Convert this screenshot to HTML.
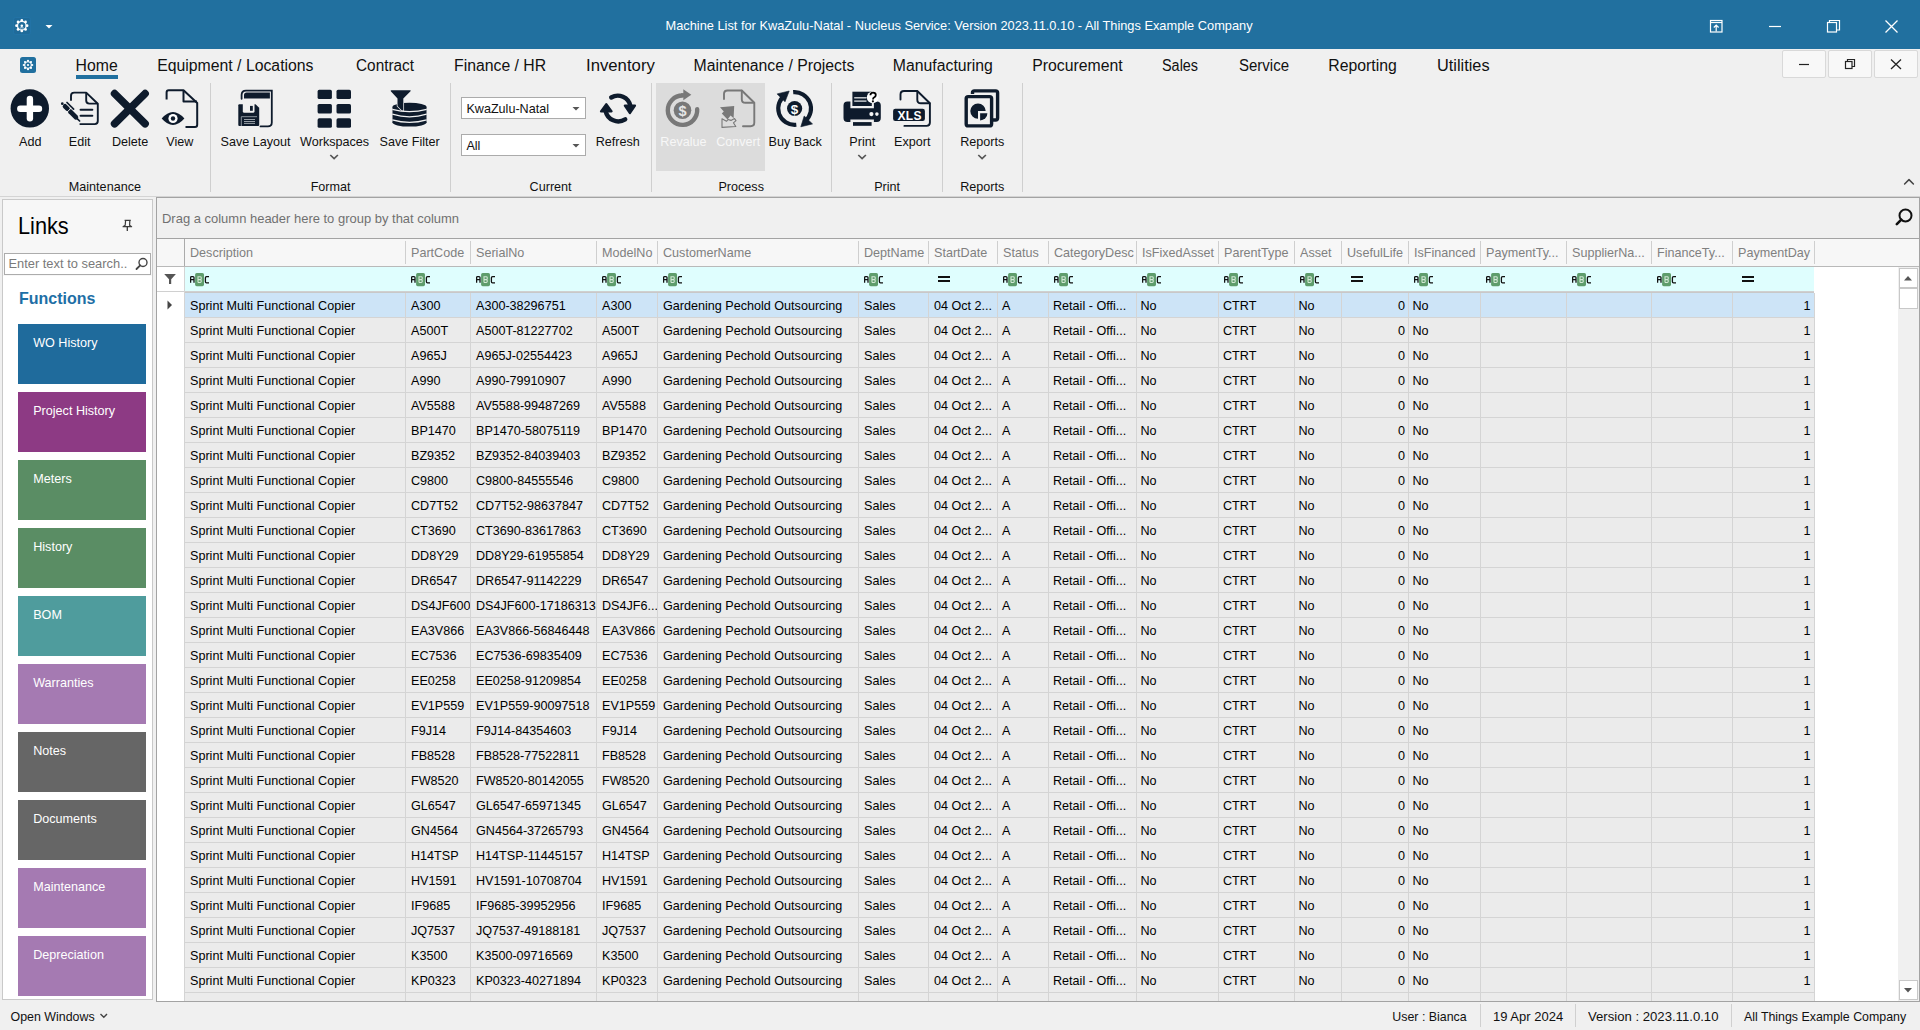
<!DOCTYPE html><html><head><meta charset="utf-8"><style>
*{margin:0;padding:0}
html,body{width:1920px;height:1030px;overflow:hidden}
body{position:relative;background:#F0F0F0;font-family:"Liberation Sans", sans-serif}
.t{position:absolute;white-space:nowrap;line-height:1}
.c{text-align:center}
.r{position:absolute}
.row{position:absolute;left:185px;width:1629px;height:24px}
.row span{position:absolute;top:7.2px;font-size:12.6px;line-height:1;white-space:nowrap;color:#000}
.row span.rr{left:auto}
</style></head><body><div class="r" style="left:0px;top:0px;width:1920px;height:49px;background:#21709F;"></div>
<svg class="r" style="left:0;top:0" width="1920" height="196" viewBox="0 0 1920 196">
<rect x="13.5" y="17.5" width="17" height="17" rx="2" fill="#1F6B9A" stroke="#2375A8" stroke-width="0.8"/>
<g transform="translate(21.8,25.7)" fill="#fff">
 <circle r="4.3" fill="none" stroke="#F2F5F8" stroke-width="1.3"/>
 <circle cx="0" cy="-5.3" r="1.35"/><circle cx="0" cy="5.3" r="1.35"/><circle cx="-5.3" cy="0" r="1.35"/><circle cx="5.3" cy="0" r="1.35"/>
 <circle cx="-3.75" cy="-3.75" r="1.35"/><circle cx="3.75" cy="3.75" r="1.35"/><circle cx="-3.75" cy="3.75" r="1.35"/><circle cx="3.75" cy="-3.75" r="1.35"/>
 <circle r="1.3"/>
 <path d="M-2 2.6 Q0 1.2 2 2.6" stroke="#9DBDD3" stroke-width="1.2" fill="none"/>
</g>
<path d="M45.5 25 L52.5 25 L49 28.5 Z" fill="#fff"/>
<!-- right window controls -->
<g stroke="#fff" stroke-width="1.2" fill="none">
 <rect x="1710.5" y="20.5" width="11.5" height="11.5"/>
 <line x1="1711" y1="22.5" x2="1722" y2="22.5"/>
 <path d="M1716.2 31.5 V25.5 M1713.8 27.5 L1716.2 25 L1718.6 27.5"/>
 <line x1="1769" y1="26.5" x2="1781" y2="26.5"/>
 <rect x="1827.5" y="22.5" width="9" height="9.5"/>
 <path d="M1829.5 22.5 V20.5 H1839.5 V30 H1837"/>
 <path d="M1885.5 20.5 L1897.5 32.5 M1897.5 20.5 L1885.5 32.5" stroke-width="1.3"/>
</g>
<!-- menu gear -->
<rect x="20" y="57" width="16" height="16" rx="2.5" fill="#21709F"/>
<g transform="translate(28,65)" fill="#fff">
 <circle r="3.3" fill="none" stroke="#fff" stroke-width="1.1"/>
 <circle cx="0" cy="-4.2" r="1.1"/><circle cx="0" cy="4.2" r="1.1"/><circle cx="-4.2" cy="0" r="1.1"/><circle cx="4.2" cy="0" r="1.1"/>
 <circle cx="-2.97" cy="-2.97" r="1.1"/><circle cx="2.97" cy="2.97" r="1.1"/><circle cx="-2.97" cy="2.97" r="1.1"/><circle cx="2.97" cy="-2.97" r="1.1"/>
 <circle r="1.1"/>
</g>
<rect x="76" y="75" width="42" height="4" fill="#21709F"/>
<path d="M1904.6 184 L1909 179.6 L1913.4 184" fill="none" stroke="#444" stroke-width="1.5" stroke-linecap="round" stroke-linejoin="round"/>
<!-- MDI buttons -->
<g fill="#F8F8F8" stroke="#D9D9D9">
 <rect x="1782.5" y="50.5" width="43" height="27" rx="1.5"/>
 <rect x="1828.5" y="50.5" width="43" height="27" rx="1.5"/>
 <rect x="1874.5" y="50.5" width="43" height="27" rx="1.5"/>
</g>
<g stroke="#222" stroke-width="1.2" fill="none">
 <line x1="1799" y1="64.5" x2="1809" y2="64.5"/>
 <rect x="1845.5" y="61.5" width="6.5" height="7"/>
 <path d="M1847.5 61.5 V59.5 H1854.5 V66.5 H1852"/>
 <path d="M1891 59.5 L1901 69 M1901 59.5 L1891 69" stroke-width="1.3"/>
</g>
</svg>
<div class="t" style="left:665.5px;top:20.0px;font-size:12.8px;color:#fff;">Machine List for KwaZulu-Natal - Nucleus Service: Version 2023.11.0.10 - All Things Example Company</div>
<div class="t" style="left:75.6px;top:58.0px;font-size:15.8px;color:#111;">Home</div>
<div class="t" style="left:157.2px;top:58.0px;font-size:15.8px;color:#111;">Equipment / Locations</div>
<div class="t" style="left:355.9px;top:58.0px;font-size:15.8px;color:#111;transform:scaleX(0.972);transform-origin:0 0">Contract</div>
<div class="t" style="left:454.0px;top:58.0px;font-size:15.8px;color:#111;">Finance / HR</div>
<div class="t" style="left:585.5px;top:58.0px;font-size:15.8px;color:#111;transform:scaleX(1.059);transform-origin:0 0">Inventory</div>
<div class="t" style="left:693.6px;top:58.0px;font-size:15.8px;color:#111;">Maintenance / Projects</div>
<div class="t" style="left:892.8px;top:58.0px;font-size:15.8px;color:#111;">Manufacturing</div>
<div class="t" style="left:1032.2px;top:58.0px;font-size:15.8px;color:#111;">Procurement</div>
<div class="t" style="left:1162.4px;top:58.0px;font-size:15.8px;color:#111;transform:scaleX(0.913);transform-origin:0 0">Sales</div>
<div class="t" style="left:1238.7px;top:58.0px;font-size:15.8px;color:#111;transform:scaleX(0.95);transform-origin:0 0">Service</div>
<div class="t" style="left:1328.25px;top:58.0px;font-size:15.8px;color:#111;">Reporting</div>
<div class="t" style="left:1437.1px;top:58.0px;font-size:15.8px;color:#111;transform:scaleX(1.032);transform-origin:0 0">Utilities</div>
<div class="r" style="left:210px;top:83px;width:1px;height:109px;background:#CFCFCF;"></div>
<div class="r" style="left:450px;top:83px;width:1px;height:109px;background:#CFCFCF;"></div>
<div class="r" style="left:651px;top:83px;width:1px;height:109px;background:#CFCFCF;"></div>
<div class="r" style="left:831px;top:83px;width:1px;height:109px;background:#CFCFCF;"></div>
<div class="r" style="left:942px;top:83px;width:1px;height:109px;background:#CFCFCF;"></div>
<div class="r" style="left:1022px;top:83px;width:1px;height:109px;background:#CFCFCF;"></div>
<div class="r" style="left:656px;top:83px;width:109px;height:88px;background:#DCDCDC;"></div>
<div class="r" style="left:0px;top:196px;width:1920px;height:1px;background:#D4D4D4;"></div>
<div class="t c" style="left:-69.7px;width:200px;top:136.3px;font-size:12.6px;color:#111">Add</div>
<div class="t c" style="left:-20.299999999999997px;width:200px;top:136.3px;font-size:12.6px;color:#111">Edit</div>
<div class="t c" style="left:30.099999999999994px;width:200px;top:136.3px;font-size:12.6px;color:#111">Delete</div>
<div class="t c" style="left:79.9px;width:200px;top:136.3px;font-size:12.6px;color:#111">View</div>
<div class="t c" style="left:155.6px;width:200px;top:136.3px;font-size:12.6px;color:#111">Save Layout</div>
<div class="t c" style="left:234.60000000000002px;width:200px;top:136.3px;font-size:12.6px;color:#111">Workspaces</div>
<div class="t c" style="left:309.7px;width:200px;top:136.3px;font-size:12.6px;color:#111">Save Filter</div>
<div class="t c" style="left:517.7px;width:200px;top:136.3px;font-size:12.6px;color:#111">Refresh</div>
<div class="t c" style="left:695.2px;width:200px;top:136.3px;font-size:12.6px;color:#111">Buy Back</div>
<div class="t c" style="left:762.3px;width:200px;top:136.3px;font-size:12.6px;color:#111">Print</div>
<div class="t c" style="left:812.3px;width:200px;top:136.3px;font-size:12.6px;color:#111">Export</div>
<div class="t c" style="left:882.3px;width:200px;top:136.3px;font-size:12.6px;color:#111">Reports</div>
<div class="t c" style="left:583.4px;width:200px;top:136.3px;font-size:12.6px;color:#F7F7F7">Revalue</div>
<div class="t c" style="left:638.2px;width:200px;top:136.3px;font-size:12.6px;color:#F7F7F7">Convert</div>
<div class="t c" style="left:4.900000000000006px;width:200px;top:181.3px;font-size:12.6px;color:#111">Maintenance</div>
<div class="t c" style="left:230.60000000000002px;width:200px;top:181.3px;font-size:12.6px;color:#111">Format</div>
<div class="t c" style="left:450.6px;width:200px;top:181.3px;font-size:12.6px;color:#111">Current</div>
<div class="t c" style="left:641.2px;width:200px;top:181.3px;font-size:12.6px;color:#111">Process</div>
<div class="t c" style="left:787.1px;width:200px;top:181.3px;font-size:12.6px;color:#111">Print</div>
<div class="t c" style="left:882.3px;width:200px;top:181.3px;font-size:12.6px;color:#111">Reports</div>
<div class="r" style="left:461px;top:97px;width:123px;height:20px;background:#fff;border:1px solid #ABABAB"></div>
<div class="t" style="left:466.4px;top:102.7px;font-size:12.6px;color:#111;">KwaZulu-Natal</div>
<div class="r" style="left:461px;top:134px;width:123px;height:20px;background:#fff;border:1px solid #ABABAB"></div>
<div class="t" style="left:466.4px;top:139.7px;font-size:12.6px;color:#111;">All</div>
<svg class="r" style="left:0;top:0" width="1040" height="200" viewBox="0 0 1040 200">
<g fill="#555"><path d="M572.5 107 H579.5 L576 110.5 Z"/><path d="M572.5 144 H579.5 L576 147.5 Z"/></g>
<g fill="none" stroke="#555" stroke-width="1.3">
 <path d="M330.3 155 L334.1 158.6 L337.9 155" stroke-width="1.7"/>
 <path d="M858.3 155 L862.1 158.6 L865.9 155" stroke-width="1.7"/>
 <path d="M978.3 155 L982.1 158.6 L985.9 155" stroke-width="1.7"/>
</g>
<!-- Add -->
<circle cx="29.8" cy="108.4" r="19.2" fill="#0E1B2C"/>
<g stroke="#fff" stroke-width="6.4" stroke-linecap="round"><line x1="20.3" y1="108.8" x2="39" y2="108.8"/><line x1="29.9" y1="99" x2="29.9" y2="118.2"/></g>
<!-- Edit -->
<g fill="none" stroke="#0E1B2C" stroke-width="1.9" stroke-linejoin="round" stroke-linecap="round">
 <path d="M71 100 V95.8 Q71 92.6 74.2 92.6 H86.2 L97.8 103.7 V121 Q97.8 124.1 94.7 124.1 H80.3"/>
 <path d="M86.2 92.9 V100.5 Q86.2 103.6 89.3 103.6 H97"/>
 <path d="M80.6 109.7 H92.3 M80.6 115.8 H92.3" stroke-width="2.1"/>
</g>
<g stroke="#0E1B2C" stroke-linecap="round">
 <circle cx="62.3" cy="103.7" r="1.35" fill="#0E1B2C" stroke="none"/>
 <line x1="65" y1="106.3" x2="67.6" y2="108.9" stroke-width="4.6"/>
 <line x1="70.3" y1="111.6" x2="75.8" y2="117.1" stroke-width="4.8"/>
 <line x1="77.2" y1="118.6" x2="79.6" y2="121" stroke-width="1.7"/>
 <line x1="67" y1="102.5" x2="73.6" y2="109.1" stroke-width="1.7"/>
 <line x1="66.9" y1="112.3" x2="71.3" y2="107.9" stroke="#F0F0F0" stroke-width="1" stroke-linecap="butt"/>
</g>
<!-- Delete -->
<g stroke="#0E1B2C" stroke-width="7.6" stroke-linecap="round"><line x1="114.6" y1="93.6" x2="145.1" y2="123.8"/><line x1="145.1" y1="93.6" x2="114.6" y2="123.8"/></g>
<!-- View -->
<g fill="none" stroke="#0E1B2C" stroke-width="2" stroke-linejoin="round">
 <path d="M166.6 99.5 V92.5 Q166.6 90.3 168.8 90.3 H183.5 L197.2 103 V124.8 Q197.2 127 195 127 H185.5"/>
 <path d="M183.5 90.5 V101.5 H197"/>
</g>
<path d="M161.7 118.5 Q172.9 105.5 184.4 118.5 Q172.9 131.5 161.7 118.5 Z" fill="#0E1B2C"/>
<circle cx="173" cy="118.5" r="4.6" fill="#fff"/><circle cx="173" cy="118.5" r="2.2" fill="#0E1B2C"/>
<!-- Save Layout -->
<path d="M241.6 98.8 V95 Q241.6 90.6 246 90.6 H271.8 V122.5 Q271.8 126.4 267.9 126.4 H260.5" fill="none" stroke="#0E1B2C" stroke-width="1.8" stroke-linecap="round"/>
<path d="M244 98.4 V94.9 Q244 92.4 246.5 92.4 H269.9 V98.4 Z" fill="#0E1B2C"/>
<path d="M239.3 104.2 H255.5 L259.2 107.8 V125 Q259.2 126 258.2 126 H239.3 Q238.3 126 238.3 125 V105.2 Q238.3 104.2 239.3 104.2 Z" fill="#0E1B2C"/>
<path d="M242.8 104 V111.2 Q242.8 112.7 244.3 112.7 H253 Q254.5 112.7 254.5 111.2 V104 Z" fill="#F0F0F0"/>
<rect x="250" y="105.9" width="2.8" height="4.9" fill="#0E1B2C"/>
<g stroke="#8A939C" stroke-width="1"><path d="M241.3 126 V116.7 H257" fill="none"/></g>
<g stroke="#A8AFB6" stroke-width="0.9"><line x1="244" y1="119.5" x2="255" y2="119.5"/><line x1="244" y1="121.5" x2="255" y2="121.5"/><line x1="244" y1="123.4" x2="255" y2="123.4"/></g>
<!-- Workspaces -->
<g fill="#0E1B2C">
 <rect x="317.6" y="89.8" width="14.3" height="9.2" rx="1.6"/><rect x="336.5" y="89.8" width="14.5" height="9.2" rx="1.6"/>
 <rect x="317.6" y="104" width="14.3" height="9.5" rx="1.6"/><rect x="336.5" y="104" width="14.5" height="9.5" rx="1.6"/>
 <rect x="317.6" y="118.3" width="14.3" height="9.5" rx="1.6"/><rect x="336.5" y="118.3" width="14.5" height="9.5" rx="1.6"/>
</g>
<!-- Save Filter -->
<g fill="#0E1B2C">
 <ellipse cx="409.5" cy="106.9" rx="17" ry="4.1"/>
 <rect x="392.5" y="106.9" width="34" height="16"/>
 <ellipse cx="409.5" cy="122.6" rx="17" ry="4"/>
</g>
<g fill="none" stroke="#F0F0F0" stroke-width="1.25">
 <path d="M392.3 109.3 Q409.5 113.9 426.7 109.3"/>
 <path d="M392.3 114.2 Q409.5 119.4 426.7 114.2"/>
 <path d="M392.3 119.8 Q409.5 124.8 426.7 119.8"/>
</g>
<path d="M391.5 90.3 H410 Q411.3 90.3 410.5 91.3 L403.3 98.4 V110.6 Q402 110.6 401.2 109.8 L397.5 106 V98.4 L390.8 91.3 Q390.2 90.3 391.5 90.3 Z" fill="#0E1B2C" stroke="#F0F0F0" stroke-width="1.5" paint-order="stroke"/>
<!-- Refresh -->
<g fill="none" stroke="#0E1B2C" stroke-width="4.4" stroke-linecap="round">
 <path d="M611.2 97.5 A12.9 12.9 0 0 1 630.4 106"/>
 <path d="M625.2 119.3 A12.9 12.9 0 0 1 605.6 111"/>
</g>
<g fill="#0E1B2C" stroke="#0E1B2C" stroke-width="2.2" stroke-linejoin="round">
 <path d="M624.8 105.6 L635 105.6 L629.9 113.1 Z"/>
 <path d="M601 111.3 L611.6 111.3 L606.3 104.2 Z"/>
</g>
<!-- Revalue -->
<path d="M697.16 109.17 A14.7 14.7 0 1 1 682.50 95.50" fill="none" stroke="#787878" stroke-width="4.4" stroke-linecap="round"/>
<path d="M683.3 89.3 L691.3 94.8 L683.3 100.2 Z" fill="#787878"/>
<rect x="681" y="93.3" width="3" height="3" fill="#787878"/>
<circle cx="682.5" cy="110.2" r="8.8" fill="#787878"/>
<text x="682.5" y="115.6" font-family="Liberation Sans" font-weight="700" font-size="14.5" fill="#E6E6E6" text-anchor="middle">$</text>
<!-- Convert -->
<g fill="none" stroke="#787878" stroke-width="1.9" stroke-linejoin="round" stroke-linecap="round">
 <path d="M724 99 V94 Q724 90.5 727.5 90.5 H741.8 L754.3 102.8 V122.5 Q754.3 126.2 750.6 126.2 H743"/>
 <path d="M741.8 90.8 V99.2 Q741.8 102.8 745.4 102.8 H753.8"/>
</g>
<path d="M720 107.3 L734.2 106 L733.6 118.2 L730.6 115.6 L727.5 119.6 L721.8 113.6 L723.8 111.6 Z" fill="#787878"/>
<path d="M722 118.8 V127.4 L735.8 126.5 L733.4 122.8 L736 120.6 L734.5 118.6 L731 120.4 L728 119.5 L726.5 121.3 Z" fill="none" stroke="#787878" stroke-width="1.1" stroke-linejoin="round"/>
<!-- Buy Back -->
<g fill="none" stroke="#0E1B2C" stroke-width="4.1">
 <path d="M785.91 94.59 A16.4 16.4 0 0 0 796.31 124.81"/>
 <path d="M793.17 92.16 A16.4 16.4 0 0 1 805.57 120.69"/>
</g>
<path d="M777.1 93.9 L789.2 91 L785 101.8 Z" fill="#0E1B2C" stroke="#0E1B2C" stroke-width="0.6" stroke-linejoin="round"/>
<path d="M800.8 126.8 L804.2 116 L812.5 123.9 Z" fill="#0E1B2C" stroke="#0E1B2C" stroke-width="0.6" stroke-linejoin="round"/>
<circle cx="794.6" cy="108.5" r="7.6" fill="#0E1B2C"/>
<text x="794.6" y="113.6" font-family="Liberation Sans" font-weight="700" font-size="13.5" fill="#fff" text-anchor="middle">$</text>
<!-- Print -->
<g fill="#0E1B2C">
 <path d="M847.5 101.5 H850.4 V108.2 H873.9 V101.5 H876.8 Q880.8 101.5 880.8 105.5 V117.9 Q880.8 121.9 876.8 121.9 H873.9 V119.4 H850.4 V121.9 H847.5 Q843.5 121.9 843.5 117.9 V105.5 Q843.5 101.5 847.5 101.5 Z"/>
 <rect x="852.4" y="91.7" width="19.4" height="14.3"/>
 <rect x="853" y="122.1" width="18.6" height="3.7"/>
</g>
<g stroke="#D5D8DB" stroke-width="1.4"><line x1="854.2" y1="97.8" x2="866.5" y2="97.8"/><line x1="854.2" y1="101.1" x2="866.5" y2="101.1"/></g>
<circle cx="871.4" cy="114.1" r="2.1" fill="#F4F4F4"/><circle cx="876.9" cy="114.1" r="1.8" fill="#F4F4F4"/>
<circle cx="872.7" cy="97.3" r="5.9" fill="#fff"/>
<path d="M870.4 95.3 Q870.4 92.6 873 92.6 Q875.8 92.6 875.8 95 Q875.8 96.6 874 97.5 Q873 98 873 99.5" fill="none" stroke="#000" stroke-width="1.8"/>
<circle cx="872.9" cy="101.3" r="1.1" fill="#000"/>
<!-- Export -->
<g fill="none" stroke="#0E1B2C" stroke-width="1.9" stroke-linejoin="round" stroke-linecap="round">
 <path d="M900.5 99.5 V94.5 Q900.5 91 904 91 H917.3 L929.9 103.3 V122.6 Q929.9 125.9 926.6 125.9 H904.4"/>
 <path d="M917.3 91.5 V99.8 Q917.3 103.3 920.8 103.3 H929.5"/>
</g>
<rect x="893.1" y="108.7" width="31.8" height="12.3" rx="2.2" fill="#0E1B2C"/>
<text x="909.6" y="119.5" font-family="Liberation Sans" font-weight="700" font-size="12" fill="#fff" text-anchor="middle" letter-spacing="0.3">XLS</text>
<!-- Reports -->
<g fill="none" stroke="#0E1B2C" stroke-width="3.4" stroke-linejoin="round">
 <path d="M972.5 94 V92.8 Q972.5 90.9 974.4 90.9 H995.6 Q997.6 90.9 997.6 92.8 V118 Q997.6 120 995.6 120 H993"/>
 <rect x="966.2" y="96.6" width="25.4" height="29.3" rx="2"/>
</g>
<path d="M978 111.1 H985.7 A7.7 7.7 0 1 0 978 118.8 Z" fill="#0E1B2C"/>
<path d="M980.1 113.2 H987.4 A7.3 7.3 0 0 1 980.1 120.5 Z" fill="#0E1B2C"/>
</svg>
<div class="r" style="left:2px;top:199px;width:151px;height:801px;background:#fff;box-sizing:border-box;border:1px solid #C9C9C9"></div>
<div class="r" style="left:3px;top:200px;width:149px;height:76px;background:#F7F7F7;"></div>
<div class="t" style="left:18px;top:214.2px;font-size:24px;color:#000;transform:scaleX(0.905);transform-origin:0 0">Links</div>
<svg class="r" style="left:120px;top:218px" width="14" height="16" viewBox="0 0 14 16"><path d="M4.6 2.3 H10.8 M5.6 2.5 L5.2 7.2 L3 8.7 H11.6 L9.6 7.2 L9.8 2.5" fill="none" stroke="#3A3A3A" stroke-width="1.2" stroke-linejoin="round"/><path d="M7.3 8.7 V13" stroke="#3A3A3A" stroke-width="1.3"/></svg>
<div class="r" style="left:4px;top:253px;width:147px;height:22px;background:#fff;box-sizing:border-box;border:1px solid #ACACAC"></div>
<div class="t" style="left:8.4px;top:258.1px;font-size:12.9px;color:#7A7A7A;">Enter text to search..</div>
<svg class="r" style="left:134px;top:256px" width="16" height="16" viewBox="0 0 16 16"><circle cx="9" cy="6.5" r="4" fill="none" stroke="#444" stroke-width="1.4"/><line x1="6.2" y1="9.3" x2="2.5" y2="13" stroke="#444" stroke-width="1.8" stroke-linecap="round"/></svg>
<div class="t" style="left:18.5px;top:291.4px;font-size:16.6px;color:#1E6FA6;font-weight:700;transform:scaleX(0.965);transform-origin:0 0">Functions</div>
<div class="r" style="left:18px;top:324px;width:128px;height:60px;background:#1F6B9C;"></div>
<div class="t" style="left:33.2px;top:336.5px;font-size:12.6px;color:#fff;">WO History</div>
<div class="r" style="left:18px;top:392px;width:128px;height:60px;background:#8D3A84;"></div>
<div class="t" style="left:33.2px;top:404.5px;font-size:12.6px;color:#fff;">Project History</div>
<div class="r" style="left:18px;top:460px;width:128px;height:60px;background:#5A8D64;"></div>
<div class="t" style="left:33.2px;top:472.5px;font-size:12.6px;color:#fff;">Meters</div>
<div class="r" style="left:18px;top:528px;width:128px;height:60px;background:#5A8D64;"></div>
<div class="t" style="left:33.2px;top:540.5px;font-size:12.6px;color:#fff;">History</div>
<div class="r" style="left:18px;top:596px;width:128px;height:60px;background:#4F9C9D;"></div>
<div class="t" style="left:33.2px;top:608.5px;font-size:12.6px;color:#fff;">BOM</div>
<div class="r" style="left:18px;top:664px;width:128px;height:60px;background:#A57AB2;"></div>
<div class="t" style="left:33.2px;top:676.5px;font-size:12.6px;color:#fff;">Warranties</div>
<div class="r" style="left:18px;top:732px;width:128px;height:60px;background:#666666;"></div>
<div class="t" style="left:33.2px;top:744.5px;font-size:12.6px;color:#fff;">Notes</div>
<div class="r" style="left:18px;top:800px;width:128px;height:60px;background:#666666;"></div>
<div class="t" style="left:33.2px;top:812.5px;font-size:12.6px;color:#fff;">Documents</div>
<div class="r" style="left:18px;top:868px;width:128px;height:60px;background:#A57AB2;"></div>
<div class="t" style="left:33.2px;top:880.5px;font-size:12.6px;color:#fff;">Maintenance</div>
<div class="r" style="left:18px;top:936px;width:128px;height:60px;background:#A57AB2;"></div>
<div class="t" style="left:33.2px;top:948.5px;font-size:12.6px;color:#fff;">Depreciation</div>
<div class="r" style="left:156px;top:197px;width:1764px;height:805px;background:#F0F0F0;box-sizing:border-box;border:1px solid #A3A3A3"></div>
<div class="t" style="left:162.2px;top:212.7px;font-size:12.6px;color:#707070;transform:scaleX(1.03);transform-origin:0 0">Drag a column header here to group by that column</div>
<svg class="r" style="left:1893px;top:205px" width="24" height="24" viewBox="0 0 24 24"><circle cx="12.5" cy="10.5" r="6" fill="none" stroke="#111" stroke-width="2"/><line x1="8.3" y1="14.7" x2="3.8" y2="19.2" stroke="#111" stroke-width="2.6" stroke-linecap="round"/></svg>
<div class="r" style="left:157px;top:238px;width:1762px;height:1px;background:#A3A3A3;"></div>
<div class="r" style="left:157px;top:239px;width:1762px;height:27px;background:#F7F7F7;"></div>
<div class="r" style="left:157px;top:266px;width:1762px;height:1px;background:#B9B9B9;"></div>
<div class="r" style="left:184px;top:239px;width:1px;height:27px;background:#ABABAB;"></div>
<div class="r" style="left:405px;top:241px;width:1px;height:23px;background:#CFCFCF;"></div>
<div class="r" style="left:470px;top:241px;width:1px;height:23px;background:#CFCFCF;"></div>
<div class="r" style="left:596px;top:241px;width:1px;height:23px;background:#CFCFCF;"></div>
<div class="r" style="left:657px;top:241px;width:1px;height:23px;background:#CFCFCF;"></div>
<div class="r" style="left:858px;top:241px;width:1px;height:23px;background:#CFCFCF;"></div>
<div class="r" style="left:928px;top:241px;width:1px;height:23px;background:#CFCFCF;"></div>
<div class="r" style="left:997px;top:241px;width:1px;height:23px;background:#CFCFCF;"></div>
<div class="r" style="left:1048px;top:241px;width:1px;height:23px;background:#CFCFCF;"></div>
<div class="r" style="left:1136px;top:241px;width:1px;height:23px;background:#CFCFCF;"></div>
<div class="r" style="left:1218px;top:241px;width:1px;height:23px;background:#CFCFCF;"></div>
<div class="r" style="left:1294px;top:241px;width:1px;height:23px;background:#CFCFCF;"></div>
<div class="r" style="left:1341px;top:241px;width:1px;height:23px;background:#CFCFCF;"></div>
<div class="r" style="left:1408px;top:241px;width:1px;height:23px;background:#CFCFCF;"></div>
<div class="r" style="left:1480px;top:241px;width:1px;height:23px;background:#CFCFCF;"></div>
<div class="r" style="left:1566px;top:241px;width:1px;height:23px;background:#CFCFCF;"></div>
<div class="r" style="left:1651px;top:241px;width:1px;height:23px;background:#CFCFCF;"></div>
<div class="r" style="left:1732px;top:241px;width:1px;height:23px;background:#CFCFCF;"></div>
<div class="r" style="left:1814px;top:241px;width:1px;height:23px;background:#CFCFCF;"></div>
<div class="t" style="left:190px;top:247.3px;font-size:12.6px;color:#808080;width:214px;overflow:hidden">Description</div>
<div class="t" style="left:411px;top:247.3px;font-size:12.6px;color:#808080;width:58px;overflow:hidden">PartCode</div>
<div class="t" style="left:476px;top:247.3px;font-size:12.6px;color:#808080;width:119px;overflow:hidden">SerialNo</div>
<div class="t" style="left:602px;top:247.3px;font-size:12.6px;color:#808080;width:54px;overflow:hidden">ModelNo</div>
<div class="t" style="left:663px;top:247.3px;font-size:12.6px;color:#808080;width:194px;overflow:hidden">CustomerName</div>
<div class="t" style="left:864px;top:247.3px;font-size:12.6px;color:#808080;width:63px;overflow:hidden">DeptName</div>
<div class="t" style="left:934px;top:247.3px;font-size:12.6px;color:#808080;width:62px;overflow:hidden">StartDate</div>
<div class="t" style="left:1003px;top:247.3px;font-size:12.6px;color:#808080;width:44px;overflow:hidden">Status</div>
<div class="t" style="left:1054px;top:247.3px;font-size:12.6px;color:#808080;width:81px;overflow:hidden">CategoryDesc</div>
<div class="t" style="left:1142px;top:247.3px;font-size:12.6px;color:#808080;width:75px;overflow:hidden">IsFixedAsset</div>
<div class="t" style="left:1224px;top:247.3px;font-size:12.6px;color:#808080;width:69px;overflow:hidden">ParentType</div>
<div class="t" style="left:1300px;top:247.3px;font-size:12.6px;color:#808080;width:40px;overflow:hidden">Asset</div>
<div class="t" style="left:1347px;top:247.3px;font-size:12.6px;color:#808080;width:60px;overflow:hidden">UsefulLife</div>
<div class="t" style="left:1414px;top:247.3px;font-size:12.6px;color:#808080;width:65px;overflow:hidden">IsFinanced</div>
<div class="t" style="left:1486px;top:247.3px;font-size:12.6px;color:#808080;width:79px;overflow:hidden">PaymentTy...</div>
<div class="t" style="left:1572px;top:247.3px;font-size:12.6px;color:#808080;width:78px;overflow:hidden">SupplierNa...</div>
<div class="t" style="left:1657px;top:247.3px;font-size:12.6px;color:#808080;width:74px;overflow:hidden">FinanceTy...</div>
<div class="t" style="left:1738px;top:247.3px;font-size:12.6px;color:#808080;width:75px;overflow:hidden">PaymentDay</div>
<div class="r" style="left:157px;top:267px;width:1741px;height:734px;background:#fff;"></div>
<div class="r" style="left:1898px;top:267px;width:21px;height:734px;background:#F0F0F0;"></div>
<div class="r" style="left:185px;top:267px;width:1629px;height:25px;background:#DFFEFE;"></div>
<div class="r" style="left:157px;top:291px;width:1657px;height:1px;background:#D0D0D0;"></div>
<div class="r" style="left:185px;top:292px;width:1629px;height:1px;background:#C8C8C8;"></div>
<svg class="r" style="left:190px;top:272.9px" width="20" height="14"><use href="#abc"/></svg>
<svg class="r" style="left:411px;top:272.9px" width="20" height="14"><use href="#abc"/></svg>
<svg class="r" style="left:476px;top:272.9px" width="20" height="14"><use href="#abc"/></svg>
<svg class="r" style="left:602px;top:272.9px" width="20" height="14"><use href="#abc"/></svg>
<svg class="r" style="left:663px;top:272.9px" width="20" height="14"><use href="#abc"/></svg>
<svg class="r" style="left:864px;top:272.9px" width="20" height="14"><use href="#abc"/></svg>
<div class="r" style="left:938px;top:276.3px;width:11.5px;height:2px;background:#111;"></div>
<div class="r" style="left:938px;top:280.2px;width:11.5px;height:2px;background:#111;"></div>
<svg class="r" style="left:1003px;top:272.9px" width="20" height="14"><use href="#abc"/></svg>
<svg class="r" style="left:1054px;top:272.9px" width="20" height="14"><use href="#abc"/></svg>
<svg class="r" style="left:1142px;top:272.9px" width="20" height="14"><use href="#abc"/></svg>
<svg class="r" style="left:1224px;top:272.9px" width="20" height="14"><use href="#abc"/></svg>
<svg class="r" style="left:1300px;top:272.9px" width="20" height="14"><use href="#abc"/></svg>
<div class="r" style="left:1351px;top:276.3px;width:11.5px;height:2px;background:#111;"></div>
<div class="r" style="left:1351px;top:280.2px;width:11.5px;height:2px;background:#111;"></div>
<svg class="r" style="left:1414px;top:272.9px" width="20" height="14"><use href="#abc"/></svg>
<svg class="r" style="left:1486px;top:272.9px" width="20" height="14"><use href="#abc"/></svg>
<svg class="r" style="left:1572px;top:272.9px" width="20" height="14"><use href="#abc"/></svg>
<svg class="r" style="left:1657px;top:272.9px" width="20" height="14"><use href="#abc"/></svg>
<div class="r" style="left:1742px;top:276.3px;width:11.5px;height:2px;background:#111;"></div>
<div class="r" style="left:1742px;top:280.2px;width:11.5px;height:2px;background:#111;"></div>
<svg class="r" style="left:0;top:0;width:0;height:0"><defs><symbol id="abc" viewBox="0 0 20 14"><path d="M0.6 9.8 V4.6 Q0.6 3.6 1.6 3.6 H3 Q4 3.6 4 4.6 V9.8 M0.6 6.6 H4" fill="none" stroke="#111" stroke-width="1.3"/><rect x="5.1" y="0" width="8.9" height="13.2" rx="1.6" fill="#5E9D6C"/><path d="M8 9.5 V3.7 H10.3 Q11.2 3.7 11.2 4.6 V5.8 Q11.2 6.6 10.3 6.6 H8 M10.3 6.6 Q11.2 6.6 11.2 7.5 V8.6 Q11.2 9.5 10.3 9.5 H8" fill="none" stroke="#D3E8D6" stroke-width="1.1"/><path d="M19 3.6 H16.5 Q15.4 3.6 15.4 4.7 V8.7 Q15.4 9.8 16.5 9.8 H19" fill="none" stroke="#111" stroke-width="1.3"/></symbol></defs></svg>
<svg class="r" style="left:162px;top:272px" width="16" height="14" viewBox="0 0 16 14"><path d="M2.2 2.1 H13.9 L9.2 7.2 V12 H7 V7.2 Z" fill="#555"/></svg>
<div class="r" style="left:0;top:0;width:1920px;height:1001px;overflow:hidden">
<div class="row" style="top:293px;background:#CDE4F7"><span style="left:5px">Sprint Multi Functional Copier</span><span style="left:226px">A300</span><span style="left:291px">A300-38296751</span><span style="left:417px">A300</span><span style="left:478px">Gardening Pechold Outsourcing</span><span style="left:679px">Sales</span><span style="left:749px">04 Oct 2...</span><span style="left:817px">A</span><span style="left:868px">Retail - Offi...</span><span style="left:955.5px">No</span><span style="left:1038px">CTRT</span><span style="left:1113.5px">No</span><span class="rr" style="right:409px">0</span><span style="left:1227.5px">No</span><span class="rr" style="right:3.5px">1</span></div>
<div class="r" style="left:185px;top:317px;width:1629px;height:1px;background:#D4D4D4;"></div>
<div class="row" style="top:318px;background:#EBEBEB"><span style="left:5px">Sprint Multi Functional Copier</span><span style="left:226px">A500T</span><span style="left:291px">A500T-81227702</span><span style="left:417px">A500T</span><span style="left:478px">Gardening Pechold Outsourcing</span><span style="left:679px">Sales</span><span style="left:749px">04 Oct 2...</span><span style="left:817px">A</span><span style="left:868px">Retail - Offi...</span><span style="left:955.5px">No</span><span style="left:1038px">CTRT</span><span style="left:1113.5px">No</span><span class="rr" style="right:409px">0</span><span style="left:1227.5px">No</span><span class="rr" style="right:3.5px">1</span></div>
<div class="r" style="left:185px;top:342px;width:1629px;height:1px;background:#D4D4D4;"></div>
<div class="row" style="top:343px;background:#EBEBEB"><span style="left:5px">Sprint Multi Functional Copier</span><span style="left:226px">A965J</span><span style="left:291px">A965J-02554423</span><span style="left:417px">A965J</span><span style="left:478px">Gardening Pechold Outsourcing</span><span style="left:679px">Sales</span><span style="left:749px">04 Oct 2...</span><span style="left:817px">A</span><span style="left:868px">Retail - Offi...</span><span style="left:955.5px">No</span><span style="left:1038px">CTRT</span><span style="left:1113.5px">No</span><span class="rr" style="right:409px">0</span><span style="left:1227.5px">No</span><span class="rr" style="right:3.5px">1</span></div>
<div class="r" style="left:185px;top:367px;width:1629px;height:1px;background:#D4D4D4;"></div>
<div class="row" style="top:368px;background:#EBEBEB"><span style="left:5px">Sprint Multi Functional Copier</span><span style="left:226px">A990</span><span style="left:291px">A990-79910907</span><span style="left:417px">A990</span><span style="left:478px">Gardening Pechold Outsourcing</span><span style="left:679px">Sales</span><span style="left:749px">04 Oct 2...</span><span style="left:817px">A</span><span style="left:868px">Retail - Offi...</span><span style="left:955.5px">No</span><span style="left:1038px">CTRT</span><span style="left:1113.5px">No</span><span class="rr" style="right:409px">0</span><span style="left:1227.5px">No</span><span class="rr" style="right:3.5px">1</span></div>
<div class="r" style="left:185px;top:392px;width:1629px;height:1px;background:#D4D4D4;"></div>
<div class="row" style="top:393px;background:#EBEBEB"><span style="left:5px">Sprint Multi Functional Copier</span><span style="left:226px">AV5588</span><span style="left:291px">AV5588-99487269</span><span style="left:417px">AV5588</span><span style="left:478px">Gardening Pechold Outsourcing</span><span style="left:679px">Sales</span><span style="left:749px">04 Oct 2...</span><span style="left:817px">A</span><span style="left:868px">Retail - Offi...</span><span style="left:955.5px">No</span><span style="left:1038px">CTRT</span><span style="left:1113.5px">No</span><span class="rr" style="right:409px">0</span><span style="left:1227.5px">No</span><span class="rr" style="right:3.5px">1</span></div>
<div class="r" style="left:185px;top:417px;width:1629px;height:1px;background:#D4D4D4;"></div>
<div class="row" style="top:418px;background:#EBEBEB"><span style="left:5px">Sprint Multi Functional Copier</span><span style="left:226px">BP1470</span><span style="left:291px">BP1470-58075119</span><span style="left:417px">BP1470</span><span style="left:478px">Gardening Pechold Outsourcing</span><span style="left:679px">Sales</span><span style="left:749px">04 Oct 2...</span><span style="left:817px">A</span><span style="left:868px">Retail - Offi...</span><span style="left:955.5px">No</span><span style="left:1038px">CTRT</span><span style="left:1113.5px">No</span><span class="rr" style="right:409px">0</span><span style="left:1227.5px">No</span><span class="rr" style="right:3.5px">1</span></div>
<div class="r" style="left:185px;top:442px;width:1629px;height:1px;background:#D4D4D4;"></div>
<div class="row" style="top:443px;background:#EBEBEB"><span style="left:5px">Sprint Multi Functional Copier</span><span style="left:226px">BZ9352</span><span style="left:291px">BZ9352-84039403</span><span style="left:417px">BZ9352</span><span style="left:478px">Gardening Pechold Outsourcing</span><span style="left:679px">Sales</span><span style="left:749px">04 Oct 2...</span><span style="left:817px">A</span><span style="left:868px">Retail - Offi...</span><span style="left:955.5px">No</span><span style="left:1038px">CTRT</span><span style="left:1113.5px">No</span><span class="rr" style="right:409px">0</span><span style="left:1227.5px">No</span><span class="rr" style="right:3.5px">1</span></div>
<div class="r" style="left:185px;top:467px;width:1629px;height:1px;background:#D4D4D4;"></div>
<div class="row" style="top:468px;background:#EBEBEB"><span style="left:5px">Sprint Multi Functional Copier</span><span style="left:226px">C9800</span><span style="left:291px">C9800-84555546</span><span style="left:417px">C9800</span><span style="left:478px">Gardening Pechold Outsourcing</span><span style="left:679px">Sales</span><span style="left:749px">04 Oct 2...</span><span style="left:817px">A</span><span style="left:868px">Retail - Offi...</span><span style="left:955.5px">No</span><span style="left:1038px">CTRT</span><span style="left:1113.5px">No</span><span class="rr" style="right:409px">0</span><span style="left:1227.5px">No</span><span class="rr" style="right:3.5px">1</span></div>
<div class="r" style="left:185px;top:492px;width:1629px;height:1px;background:#D4D4D4;"></div>
<div class="row" style="top:493px;background:#EBEBEB"><span style="left:5px">Sprint Multi Functional Copier</span><span style="left:226px">CD7T52</span><span style="left:291px">CD7T52-98637847</span><span style="left:417px">CD7T52</span><span style="left:478px">Gardening Pechold Outsourcing</span><span style="left:679px">Sales</span><span style="left:749px">04 Oct 2...</span><span style="left:817px">A</span><span style="left:868px">Retail - Offi...</span><span style="left:955.5px">No</span><span style="left:1038px">CTRT</span><span style="left:1113.5px">No</span><span class="rr" style="right:409px">0</span><span style="left:1227.5px">No</span><span class="rr" style="right:3.5px">1</span></div>
<div class="r" style="left:185px;top:517px;width:1629px;height:1px;background:#D4D4D4;"></div>
<div class="row" style="top:518px;background:#EBEBEB"><span style="left:5px">Sprint Multi Functional Copier</span><span style="left:226px">CT3690</span><span style="left:291px">CT3690-83617863</span><span style="left:417px">CT3690</span><span style="left:478px">Gardening Pechold Outsourcing</span><span style="left:679px">Sales</span><span style="left:749px">04 Oct 2...</span><span style="left:817px">A</span><span style="left:868px">Retail - Offi...</span><span style="left:955.5px">No</span><span style="left:1038px">CTRT</span><span style="left:1113.5px">No</span><span class="rr" style="right:409px">0</span><span style="left:1227.5px">No</span><span class="rr" style="right:3.5px">1</span></div>
<div class="r" style="left:185px;top:542px;width:1629px;height:1px;background:#D4D4D4;"></div>
<div class="row" style="top:543px;background:#EBEBEB"><span style="left:5px">Sprint Multi Functional Copier</span><span style="left:226px">DD8Y29</span><span style="left:291px">DD8Y29-61955854</span><span style="left:417px">DD8Y29</span><span style="left:478px">Gardening Pechold Outsourcing</span><span style="left:679px">Sales</span><span style="left:749px">04 Oct 2...</span><span style="left:817px">A</span><span style="left:868px">Retail - Offi...</span><span style="left:955.5px">No</span><span style="left:1038px">CTRT</span><span style="left:1113.5px">No</span><span class="rr" style="right:409px">0</span><span style="left:1227.5px">No</span><span class="rr" style="right:3.5px">1</span></div>
<div class="r" style="left:185px;top:567px;width:1629px;height:1px;background:#D4D4D4;"></div>
<div class="row" style="top:568px;background:#EBEBEB"><span style="left:5px">Sprint Multi Functional Copier</span><span style="left:226px">DR6547</span><span style="left:291px">DR6547-91142229</span><span style="left:417px">DR6547</span><span style="left:478px">Gardening Pechold Outsourcing</span><span style="left:679px">Sales</span><span style="left:749px">04 Oct 2...</span><span style="left:817px">A</span><span style="left:868px">Retail - Offi...</span><span style="left:955.5px">No</span><span style="left:1038px">CTRT</span><span style="left:1113.5px">No</span><span class="rr" style="right:409px">0</span><span style="left:1227.5px">No</span><span class="rr" style="right:3.5px">1</span></div>
<div class="r" style="left:185px;top:592px;width:1629px;height:1px;background:#D4D4D4;"></div>
<div class="row" style="top:593px;background:#EBEBEB"><span style="left:5px">Sprint Multi Functional Copier</span><span style="left:226px">DS4JF600</span><span style="left:291px">DS4JF600-17186313</span><span style="left:417px">DS4JF6...</span><span style="left:478px">Gardening Pechold Outsourcing</span><span style="left:679px">Sales</span><span style="left:749px">04 Oct 2...</span><span style="left:817px">A</span><span style="left:868px">Retail - Offi...</span><span style="left:955.5px">No</span><span style="left:1038px">CTRT</span><span style="left:1113.5px">No</span><span class="rr" style="right:409px">0</span><span style="left:1227.5px">No</span><span class="rr" style="right:3.5px">1</span></div>
<div class="r" style="left:185px;top:617px;width:1629px;height:1px;background:#D4D4D4;"></div>
<div class="row" style="top:618px;background:#EBEBEB"><span style="left:5px">Sprint Multi Functional Copier</span><span style="left:226px">EA3V866</span><span style="left:291px">EA3V866-56846448</span><span style="left:417px">EA3V866</span><span style="left:478px">Gardening Pechold Outsourcing</span><span style="left:679px">Sales</span><span style="left:749px">04 Oct 2...</span><span style="left:817px">A</span><span style="left:868px">Retail - Offi...</span><span style="left:955.5px">No</span><span style="left:1038px">CTRT</span><span style="left:1113.5px">No</span><span class="rr" style="right:409px">0</span><span style="left:1227.5px">No</span><span class="rr" style="right:3.5px">1</span></div>
<div class="r" style="left:185px;top:642px;width:1629px;height:1px;background:#D4D4D4;"></div>
<div class="row" style="top:643px;background:#EBEBEB"><span style="left:5px">Sprint Multi Functional Copier</span><span style="left:226px">EC7536</span><span style="left:291px">EC7536-69835409</span><span style="left:417px">EC7536</span><span style="left:478px">Gardening Pechold Outsourcing</span><span style="left:679px">Sales</span><span style="left:749px">04 Oct 2...</span><span style="left:817px">A</span><span style="left:868px">Retail - Offi...</span><span style="left:955.5px">No</span><span style="left:1038px">CTRT</span><span style="left:1113.5px">No</span><span class="rr" style="right:409px">0</span><span style="left:1227.5px">No</span><span class="rr" style="right:3.5px">1</span></div>
<div class="r" style="left:185px;top:667px;width:1629px;height:1px;background:#D4D4D4;"></div>
<div class="row" style="top:668px;background:#EBEBEB"><span style="left:5px">Sprint Multi Functional Copier</span><span style="left:226px">EE0258</span><span style="left:291px">EE0258-91209854</span><span style="left:417px">EE0258</span><span style="left:478px">Gardening Pechold Outsourcing</span><span style="left:679px">Sales</span><span style="left:749px">04 Oct 2...</span><span style="left:817px">A</span><span style="left:868px">Retail - Offi...</span><span style="left:955.5px">No</span><span style="left:1038px">CTRT</span><span style="left:1113.5px">No</span><span class="rr" style="right:409px">0</span><span style="left:1227.5px">No</span><span class="rr" style="right:3.5px">1</span></div>
<div class="r" style="left:185px;top:692px;width:1629px;height:1px;background:#D4D4D4;"></div>
<div class="row" style="top:693px;background:#EBEBEB"><span style="left:5px">Sprint Multi Functional Copier</span><span style="left:226px">EV1P559</span><span style="left:291px">EV1P559-90097518</span><span style="left:417px">EV1P559</span><span style="left:478px">Gardening Pechold Outsourcing</span><span style="left:679px">Sales</span><span style="left:749px">04 Oct 2...</span><span style="left:817px">A</span><span style="left:868px">Retail - Offi...</span><span style="left:955.5px">No</span><span style="left:1038px">CTRT</span><span style="left:1113.5px">No</span><span class="rr" style="right:409px">0</span><span style="left:1227.5px">No</span><span class="rr" style="right:3.5px">1</span></div>
<div class="r" style="left:185px;top:717px;width:1629px;height:1px;background:#D4D4D4;"></div>
<div class="row" style="top:718px;background:#EBEBEB"><span style="left:5px">Sprint Multi Functional Copier</span><span style="left:226px">F9J14</span><span style="left:291px">F9J14-84354603</span><span style="left:417px">F9J14</span><span style="left:478px">Gardening Pechold Outsourcing</span><span style="left:679px">Sales</span><span style="left:749px">04 Oct 2...</span><span style="left:817px">A</span><span style="left:868px">Retail - Offi...</span><span style="left:955.5px">No</span><span style="left:1038px">CTRT</span><span style="left:1113.5px">No</span><span class="rr" style="right:409px">0</span><span style="left:1227.5px">No</span><span class="rr" style="right:3.5px">1</span></div>
<div class="r" style="left:185px;top:742px;width:1629px;height:1px;background:#D4D4D4;"></div>
<div class="row" style="top:743px;background:#EBEBEB"><span style="left:5px">Sprint Multi Functional Copier</span><span style="left:226px">FB8528</span><span style="left:291px">FB8528-77522811</span><span style="left:417px">FB8528</span><span style="left:478px">Gardening Pechold Outsourcing</span><span style="left:679px">Sales</span><span style="left:749px">04 Oct 2...</span><span style="left:817px">A</span><span style="left:868px">Retail - Offi...</span><span style="left:955.5px">No</span><span style="left:1038px">CTRT</span><span style="left:1113.5px">No</span><span class="rr" style="right:409px">0</span><span style="left:1227.5px">No</span><span class="rr" style="right:3.5px">1</span></div>
<div class="r" style="left:185px;top:767px;width:1629px;height:1px;background:#D4D4D4;"></div>
<div class="row" style="top:768px;background:#EBEBEB"><span style="left:5px">Sprint Multi Functional Copier</span><span style="left:226px">FW8520</span><span style="left:291px">FW8520-80142055</span><span style="left:417px">FW8520</span><span style="left:478px">Gardening Pechold Outsourcing</span><span style="left:679px">Sales</span><span style="left:749px">04 Oct 2...</span><span style="left:817px">A</span><span style="left:868px">Retail - Offi...</span><span style="left:955.5px">No</span><span style="left:1038px">CTRT</span><span style="left:1113.5px">No</span><span class="rr" style="right:409px">0</span><span style="left:1227.5px">No</span><span class="rr" style="right:3.5px">1</span></div>
<div class="r" style="left:185px;top:792px;width:1629px;height:1px;background:#D4D4D4;"></div>
<div class="row" style="top:793px;background:#EBEBEB"><span style="left:5px">Sprint Multi Functional Copier</span><span style="left:226px">GL6547</span><span style="left:291px">GL6547-65971345</span><span style="left:417px">GL6547</span><span style="left:478px">Gardening Pechold Outsourcing</span><span style="left:679px">Sales</span><span style="left:749px">04 Oct 2...</span><span style="left:817px">A</span><span style="left:868px">Retail - Offi...</span><span style="left:955.5px">No</span><span style="left:1038px">CTRT</span><span style="left:1113.5px">No</span><span class="rr" style="right:409px">0</span><span style="left:1227.5px">No</span><span class="rr" style="right:3.5px">1</span></div>
<div class="r" style="left:185px;top:817px;width:1629px;height:1px;background:#D4D4D4;"></div>
<div class="row" style="top:818px;background:#EBEBEB"><span style="left:5px">Sprint Multi Functional Copier</span><span style="left:226px">GN4564</span><span style="left:291px">GN4564-37265793</span><span style="left:417px">GN4564</span><span style="left:478px">Gardening Pechold Outsourcing</span><span style="left:679px">Sales</span><span style="left:749px">04 Oct 2...</span><span style="left:817px">A</span><span style="left:868px">Retail - Offi...</span><span style="left:955.5px">No</span><span style="left:1038px">CTRT</span><span style="left:1113.5px">No</span><span class="rr" style="right:409px">0</span><span style="left:1227.5px">No</span><span class="rr" style="right:3.5px">1</span></div>
<div class="r" style="left:185px;top:842px;width:1629px;height:1px;background:#D4D4D4;"></div>
<div class="row" style="top:843px;background:#EBEBEB"><span style="left:5px">Sprint Multi Functional Copier</span><span style="left:226px">H14TSP</span><span style="left:291px">H14TSP-11445157</span><span style="left:417px">H14TSP</span><span style="left:478px">Gardening Pechold Outsourcing</span><span style="left:679px">Sales</span><span style="left:749px">04 Oct 2...</span><span style="left:817px">A</span><span style="left:868px">Retail - Offi...</span><span style="left:955.5px">No</span><span style="left:1038px">CTRT</span><span style="left:1113.5px">No</span><span class="rr" style="right:409px">0</span><span style="left:1227.5px">No</span><span class="rr" style="right:3.5px">1</span></div>
<div class="r" style="left:185px;top:867px;width:1629px;height:1px;background:#D4D4D4;"></div>
<div class="row" style="top:868px;background:#EBEBEB"><span style="left:5px">Sprint Multi Functional Copier</span><span style="left:226px">HV1591</span><span style="left:291px">HV1591-10708704</span><span style="left:417px">HV1591</span><span style="left:478px">Gardening Pechold Outsourcing</span><span style="left:679px">Sales</span><span style="left:749px">04 Oct 2...</span><span style="left:817px">A</span><span style="left:868px">Retail - Offi...</span><span style="left:955.5px">No</span><span style="left:1038px">CTRT</span><span style="left:1113.5px">No</span><span class="rr" style="right:409px">0</span><span style="left:1227.5px">No</span><span class="rr" style="right:3.5px">1</span></div>
<div class="r" style="left:185px;top:892px;width:1629px;height:1px;background:#D4D4D4;"></div>
<div class="row" style="top:893px;background:#EBEBEB"><span style="left:5px">Sprint Multi Functional Copier</span><span style="left:226px">IF9685</span><span style="left:291px">IF9685-39952956</span><span style="left:417px">IF9685</span><span style="left:478px">Gardening Pechold Outsourcing</span><span style="left:679px">Sales</span><span style="left:749px">04 Oct 2...</span><span style="left:817px">A</span><span style="left:868px">Retail - Offi...</span><span style="left:955.5px">No</span><span style="left:1038px">CTRT</span><span style="left:1113.5px">No</span><span class="rr" style="right:409px">0</span><span style="left:1227.5px">No</span><span class="rr" style="right:3.5px">1</span></div>
<div class="r" style="left:185px;top:917px;width:1629px;height:1px;background:#D4D4D4;"></div>
<div class="row" style="top:918px;background:#EBEBEB"><span style="left:5px">Sprint Multi Functional Copier</span><span style="left:226px">JQ7537</span><span style="left:291px">JQ7537-49188181</span><span style="left:417px">JQ7537</span><span style="left:478px">Gardening Pechold Outsourcing</span><span style="left:679px">Sales</span><span style="left:749px">04 Oct 2...</span><span style="left:817px">A</span><span style="left:868px">Retail - Offi...</span><span style="left:955.5px">No</span><span style="left:1038px">CTRT</span><span style="left:1113.5px">No</span><span class="rr" style="right:409px">0</span><span style="left:1227.5px">No</span><span class="rr" style="right:3.5px">1</span></div>
<div class="r" style="left:185px;top:942px;width:1629px;height:1px;background:#D4D4D4;"></div>
<div class="row" style="top:943px;background:#EBEBEB"><span style="left:5px">Sprint Multi Functional Copier</span><span style="left:226px">K3500</span><span style="left:291px">K3500-09716569</span><span style="left:417px">K3500</span><span style="left:478px">Gardening Pechold Outsourcing</span><span style="left:679px">Sales</span><span style="left:749px">04 Oct 2...</span><span style="left:817px">A</span><span style="left:868px">Retail - Offi...</span><span style="left:955.5px">No</span><span style="left:1038px">CTRT</span><span style="left:1113.5px">No</span><span class="rr" style="right:409px">0</span><span style="left:1227.5px">No</span><span class="rr" style="right:3.5px">1</span></div>
<div class="r" style="left:185px;top:967px;width:1629px;height:1px;background:#D4D4D4;"></div>
<div class="row" style="top:968px;background:#EBEBEB"><span style="left:5px">Sprint Multi Functional Copier</span><span style="left:226px">KP0323</span><span style="left:291px">KP0323-40271894</span><span style="left:417px">KP0323</span><span style="left:478px">Gardening Pechold Outsourcing</span><span style="left:679px">Sales</span><span style="left:749px">04 Oct 2...</span><span style="left:817px">A</span><span style="left:868px">Retail - Offi...</span><span style="left:955.5px">No</span><span style="left:1038px">CTRT</span><span style="left:1113.5px">No</span><span class="rr" style="right:409px">0</span><span style="left:1227.5px">No</span><span class="rr" style="right:3.5px">1</span></div>
<div class="r" style="left:185px;top:992px;width:1629px;height:1px;background:#D4D4D4;"></div>
<div class="row" style="top:993px;background:#EBEBEB"><span style="left:5px">Sprint Multi Functional Copier</span><span style="left:226px">LA1234</span><span style="left:291px">LA1234-11111111</span><span style="left:417px">LA1234</span><span style="left:478px">Gardening Pechold Outsourcing</span><span style="left:679px">Sales</span><span style="left:749px">04 Oct 2...</span><span style="left:817px">A</span><span style="left:868px">Retail - Offi...</span><span style="left:955.5px">No</span><span style="left:1038px">CTRT</span><span style="left:1113.5px">No</span><span class="rr" style="right:409px">0</span><span style="left:1227.5px">No</span><span class="rr" style="right:3.5px">1</span></div>
<div class="r" style="left:185px;top:1017px;width:1629px;height:1px;background:#D4D4D4;"></div>
</div>
<div class="r" style="left:405px;top:293px;width:1px;height:708px;background:#D4D4D4;"></div>
<div class="r" style="left:470px;top:293px;width:1px;height:708px;background:#D4D4D4;"></div>
<div class="r" style="left:596px;top:293px;width:1px;height:708px;background:#D4D4D4;"></div>
<div class="r" style="left:657px;top:293px;width:1px;height:708px;background:#D4D4D4;"></div>
<div class="r" style="left:858px;top:293px;width:1px;height:708px;background:#D4D4D4;"></div>
<div class="r" style="left:928px;top:293px;width:1px;height:708px;background:#D4D4D4;"></div>
<div class="r" style="left:997px;top:293px;width:1px;height:708px;background:#D4D4D4;"></div>
<div class="r" style="left:1048px;top:293px;width:1px;height:708px;background:#D4D4D4;"></div>
<div class="r" style="left:1136px;top:293px;width:1px;height:708px;background:#D4D4D4;"></div>
<div class="r" style="left:1218px;top:293px;width:1px;height:708px;background:#D4D4D4;"></div>
<div class="r" style="left:1294px;top:293px;width:1px;height:708px;background:#D4D4D4;"></div>
<div class="r" style="left:1341px;top:293px;width:1px;height:708px;background:#D4D4D4;"></div>
<div class="r" style="left:1408px;top:293px;width:1px;height:708px;background:#D4D4D4;"></div>
<div class="r" style="left:1480px;top:293px;width:1px;height:708px;background:#D4D4D4;"></div>
<div class="r" style="left:1566px;top:293px;width:1px;height:708px;background:#D4D4D4;"></div>
<div class="r" style="left:1651px;top:293px;width:1px;height:708px;background:#D4D4D4;"></div>
<div class="r" style="left:1732px;top:293px;width:1px;height:708px;background:#D4D4D4;"></div>
<div class="r" style="left:1814px;top:293px;width:1px;height:708px;background:#D4D4D4;"></div>
<div class="r" style="left:184px;top:267px;width:1px;height:734px;background:#D4D4D4;"></div>
<svg class="r" style="left:165px;top:299px" width="10" height="12" viewBox="0 0 10 12"><path d="M2.5 1.5 L7 6 L2.5 10.5 Z" fill="#444"/></svg>
<div class="r" style="left:1899px;top:268px;width:19px;height:20px;background:#fff;box-sizing:border-box;border:1px solid #C8C8C8"></div>
<div class="r" style="left:1899px;top:288px;width:19px;height:21px;background:#fff;box-sizing:border-box;border:1px solid #C8C8C8"></div>
<div class="r" style="left:1899px;top:980px;width:19px;height:20px;background:#fff;box-sizing:border-box;border:1px solid #C8C8C8"></div>
<svg class="r" style="left:1899px;top:268px" width="19" height="20" viewBox="0 0 19 20"><path d="M5 12.5 H13 L9 8 Z" fill="#555"/></svg>
<svg class="r" style="left:1899px;top:980px" width="19" height="20" viewBox="0 0 19 20"><path d="M5 8 H13 L9 12.5 Z" fill="#555"/></svg>
<div class="t" style="left:10.6px;top:1010.7px;font-size:12.4px;color:#111;">Open Windows</div>
<svg class="r" style="left:99px;top:1011px" width="10" height="10" viewBox="0 0 10 10"><path d="M1.5 3 L4.8 6.3 L8 3" fill="none" stroke="#444" stroke-width="1.4"/></svg>
<div class="r" style="left:1480px;top:1004px;width:1px;height:23px;background:#D0D0D0;"></div>
<div class="r" style="left:1575px;top:1004px;width:1px;height:23px;background:#D0D0D0;"></div>
<div class="r" style="left:1731px;top:1004px;width:1px;height:23px;background:#D0D0D0;"></div>
<div class="t" style="left:1392.3px;top:1010.7px;font-size:12.4px;color:#111;">User : Bianca</div>
<div class="t" style="left:1492.6px;top:1010.7px;font-size:12.4px;color:#111;transform:scaleX(1.05);transform-origin:0 0">19 Apr 2024</div>
<div class="t" style="left:1588.4px;top:1010.7px;font-size:12.4px;color:#111;transform:scaleX(1.06);transform-origin:0 0">Version : 2023.11.0.10</div>
<div class="t" style="left:1743.9px;top:1010.7px;font-size:12.4px;color:#111;">All Things Example Company</div></body></html>
